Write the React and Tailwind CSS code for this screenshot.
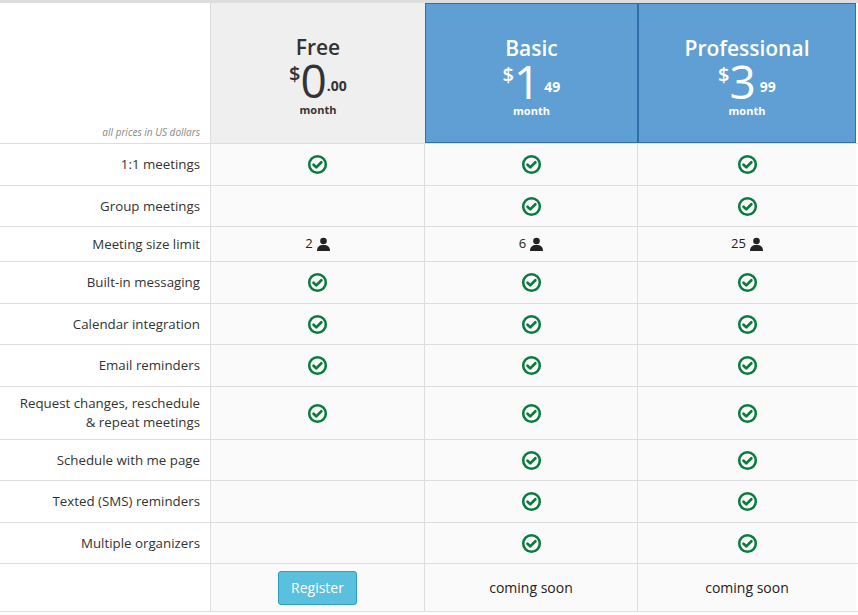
import React from 'react'

const Check = () => (
  <svg width="21" height="21" viewBox="0 0 24 24" fill="none">
    <circle cx="12" cy="12" r="9.5" stroke="#0b7a3f" strokeWidth="2.9" />
    <path d="M7.5 12.3l3.1 3 5.8-5.9" stroke="#0b7a3f" strokeWidth="3.1" strokeLinecap="round" strokeLinejoin="round" />
  </svg>
)

const Person = () => (
  <svg width="13" height="14" viewBox="0 0 13 14" className="inline-block ml-1 -mt-0.5">
    <circle cx="6.5" cy="4" r="3.3" fill="#222" />
    <path d="M0 14c0-4.2 2.3-6 6.5-6s6.5 1.8 6.5 6z" fill="#222" />
  </svg>
)

const rows = [
  ['1:1 meetings', 42, [true, true, true]],
  ['Group meetings', 41, [false, true, true]],
  ['Meeting size limit', 35, ['2', '6', '25']],
  ['Built-in messaging', 42, [true, true, true]],
  ['Calendar integration', 41, [true, true, true]],
  ['Email reminders', 42, [true, true, true]],
  ['Request changes, reschedule\n& repeat meetings', 53, [true, true, true]],
  ['Schedule with me page', 41, [false, true, true]],
  ['Texted (SMS) reminders', 42, [false, true, true]],
  ['Multiple organizers', 41, [false, true, true]],
]

const cols = 'grid grid-cols-[211px_214px_213px_218px]'

function Plan({ name, whole, cents, blue }) {
  return (
    <div className={`flex flex-col items-center pt-[31px] ${blue ? 'bg-[#5f9fd3] text-white border border-[#2d6fa9]' : 'bg-[#efefef] text-[#333]'}`}>
      <div className="text-[21px] leading-[26px] font-semibold">{name}</div>
      <div className="flex items-start leading-none -mt-[1px]">
        <span className="text-[20px] font-semibold mt-[5px]">$</span>
        <span className="text-[46px] leading-[42px]">{whole}</span>
        <span className={`text-[14px] font-bold mt-[20px] ${blue ? 'ml-1' : ''}`}>{cents}</span>
      </div>
      <div className="text-[11px] leading-[14px] font-bold mt-[2px]">month</div>
    </div>
  )
}

export default function App() {
  return (
    <div className="w-[858px] h-[615px] bg-white text-[#333] text-[13px]" style={{ fontFamily: '"Open Sans", sans-serif' }}>
      <div className={`${cols} h-[144px] border-b border-[#ddd] border-t-[3px] border-t-[#ddd]`}>
        <div className="flex items-end justify-end pr-[10px] pb-[3px] border-r border-[#ddd]">
          <span className="italic text-[10px] text-[#888]">all prices in US dollars</span>
        </div>
        <Plan name="Free" whole="0" cents=".00" />
        <Plan name="Basic" whole="1" cents="49" blue />
        <Plan name="Professional" whole="3" cents="99" blue />
      </div>
      {rows.map(([label, h, vals]) => (
        <div key={label} className={`${cols} border-b border-[#ddd]`} style={{ height: h }}>
          <div className="flex items-center justify-end text-right pr-[10px] whitespace-pre-line leading-[19px] text-[13.3px] border-r border-[#ddd]">{label}</div>
          {vals.map((v, i) => (
            <div key={i} className={`flex items-center justify-center bg-[#fafafa] ${i < 2 ? 'border-r border-[#ddd]' : ''}`}>
              {v === true ? <Check /> : v ? <span className="text-[13px] text-[#222]">{v}<Person /></span> : null}
            </div>
          ))}
        </div>
      ))}
      <div className={`${cols} h-[48px] border-b border-[#ddd]`}>
        <div className="border-r border-[#ddd]" />
        <div className="flex items-center justify-center bg-[#fafafa] border-r border-[#ddd]">
          <button className="h-[34px] px-[12px] rounded-[3px] bg-[#5bc0de] border border-[#2aa0c2] text-white text-[14px]">Register</button>
        </div>
        <div className="flex items-center justify-center bg-[#fafafa] border-r border-[#ddd] text-[14px] text-[#222]">coming soon</div>
        <div className="flex items-center justify-center bg-[#fafafa] text-[14px] text-[#222]">coming soon</div>
      </div>
    </div>
  )
}
